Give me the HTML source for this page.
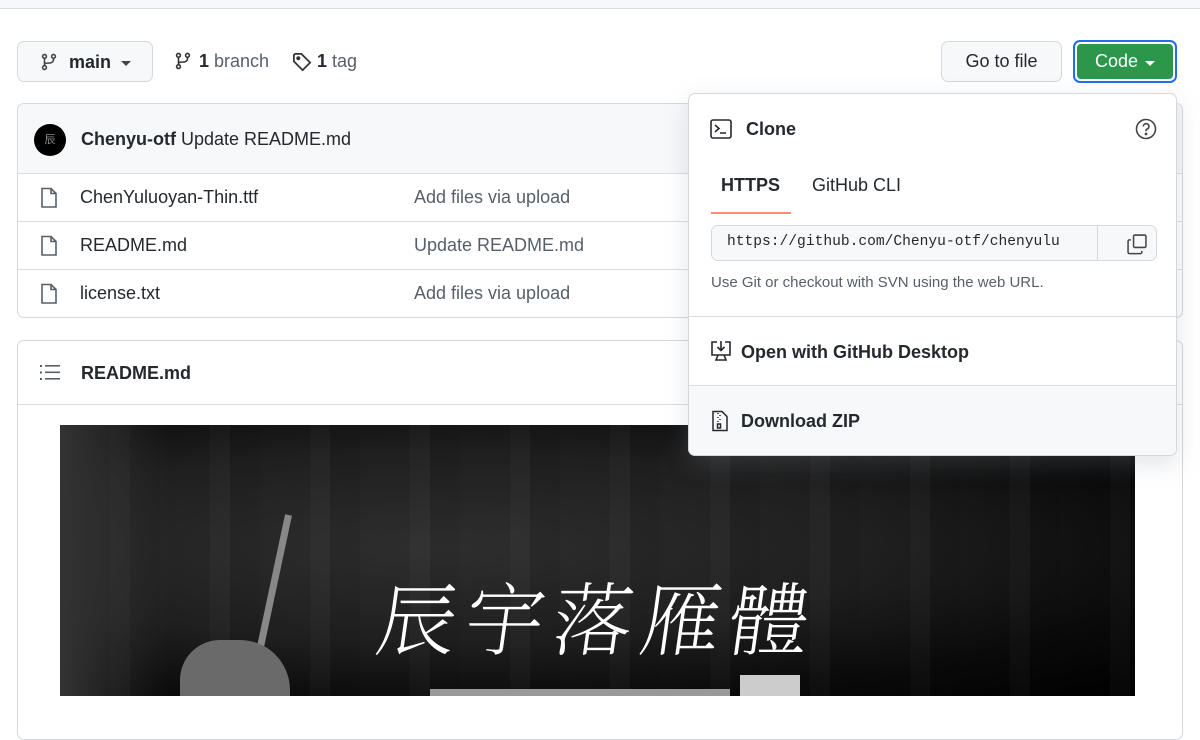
<!DOCTYPE html>
<html><head><meta charset="utf-8"><style>
*{box-sizing:border-box;margin:0;padding:0}
body{width:1200px;height:696px;overflow:hidden;background:#fff;font-family:"Liberation Sans","Noto Sans CJK TC",sans-serif;color:#24292f;position:relative;font-size:18px}
.abs{position:absolute}
.btn{position:absolute;border:1px solid #d4d8dd;border-radius:7px;background:#f6f8fa;display:flex;align-items:center}
svg{display:block}
.row{position:absolute;left:17px;width:1166px;height:48px;border-top:1px solid #d8dee4;display:flex;align-items:center}
.row .n{position:absolute;left:63px}
.row .m{position:absolute;left:397px;color:#57606a}
</style></head><body>
<div class="abs" style="left:0;top:0;width:1200px;height:9px;background:#f6f8fa;border-bottom:1px solid #d8dee4"></div>

<div class="btn" style="left:17px;top:41px;width:136px;height:41px;">
 <svg class="abs" style="left:22px;top:11px" width="18" height="18" viewBox="0 0 16 16" fill="none" stroke="#444" stroke-width="1.4"><circle cx="4" cy="3" r="1.7"/><circle cx="4" cy="13" r="1.7"/><circle cx="12" cy="3" r="1.7"/><path d="M4 4.7v6.6M12 4.7v1.3c0 2-2 3-4 3H6c-1.2 0-2 .8-2 2"/></svg>
 <span class="abs" style="left:51px;top:10px;font-weight:bold">main</span>
 <span class="abs" style="left:103px;top:19px;border:5px solid transparent;border-top:5px solid #444;border-bottom:0"></span>
</div>
<svg class="abs" style="left:174px;top:52px" width="18" height="18" viewBox="0 0 16 16" fill="none" stroke="#333" stroke-width="1.4"><circle cx="4" cy="3" r="1.7"/><circle cx="4" cy="13" r="1.7"/><circle cx="12" cy="3" r="1.7"/><path d="M4 4.7v6.6M12 4.7v1.3c0 2-2 3-4 3H6c-1.2 0-2 .8-2 2"/></svg>
<div class="abs" style="left:199px;top:51px"><b>1</b> <span style="color:#57606a">branch</span></div>
<svg class="abs" style="left:292px;top:52px" width="20" height="20" viewBox="0 0 16 16" fill="none" stroke="#333" stroke-width="1.4"><path d="M1.5 2.5v5l7 7 6-6-7-7h-5z"/><circle cx="5" cy="5" r=".9" fill="#333"/></svg>
<div class="abs" style="left:317px;top:51px"><b>1</b> <span style="color:#57606a">tag</span></div>

<div class="btn" style="left:941px;top:41px;width:121px;height:41px;justify-content:center">Go to file</div>
<div class="abs" style="left:1073px;top:40px;width:104px;height:43px;border:2px solid #1f6feb;border-radius:7px;padding:2px"><div style="width:100%;height:100%;background:#2c974b;border-radius:4px;color:#fff;display:flex;align-items:center;justify-content:center;font-size:18px">Code<span style="margin-left:7px;border:5px solid transparent;border-top:5px solid #fff;border-bottom:0;margin-top:3px"></span></div></div>

<div class="abs" style="left:17px;top:103px;width:1166px;height:215px;border:1px solid #d4d8dd;border-radius:7px;overflow:hidden">
 <div style="height:70px;background:#f6f8fa;position:relative">
  <div class="abs" style="left:16px;top:20px;width:32px;height:32px;border-radius:50%;background:#000;color:#888;font-size:11px;text-align:center;line-height:32px">辰</div>
  <div class="abs" style="left:63px;top:25px"><b>Chenyu-otf</b> Update README.md</div>
 </div>
</div>
<div class="row" style="top:173px"><svg class="abs" style="left:23px" width="18" height="22" viewBox="0 0 18 22" fill="none" stroke="#57606a" stroke-width="1.6"><path d="M2 1.5h9l5 5v13.5H2z M11 1.5v5h5"/></svg><span class="n">ChenYuluoyan-Thin.ttf</span><span class="m">Add files via upload</span></div>
<div class="row" style="top:221px"><svg class="abs" style="left:23px" width="18" height="22" viewBox="0 0 18 22" fill="none" stroke="#57606a" stroke-width="1.6"><path d="M2 1.5h9l5 5v13.5H2z M11 1.5v5h5"/></svg><span class="n">README.md</span><span class="m">Update README.md</span></div>
<div class="row" style="top:269px"><svg class="abs" style="left:23px" width="18" height="22" viewBox="0 0 18 22" fill="none" stroke="#57606a" stroke-width="1.6"><path d="M2 1.5h9l5 5v13.5H2z M11 1.5v5h5"/></svg><span class="n">license.txt</span><span class="m">Add files via upload</span></div>

<div class="abs" style="left:17px;top:340px;width:1166px;height:400px;border:1px solid #d4d8dd;border-radius:7px;overflow:hidden">
 <div style="height:64px;border-bottom:1px solid #d8dee4;position:relative">
  <svg class="abs" style="left:22px;top:23px" width="20" height="17" viewBox="0 0 20 17" fill="#57606a"><rect x="0" y="1" width="2" height="2"/><rect x="0" y="7.5" width="2" height="2"/><rect x="0" y="14" width="2" height="2"/><rect x="5" y="1" width="15" height="1.6"/><rect x="5" y="7.5" width="15" height="1.6"/><rect x="5" y="14" width="15" height="1.6"/></svg>
  <b class="abs" style="left:63px;top:22px">README.md</b>
 </div>
</div>
<div class="abs" style="left:60px;top:425px;width:1075px;height:271px;overflow:hidden;background:radial-gradient(ellipse at 35% 45%,#2e2e2e 0%,#1f1f1f 45%,#0a0a0a 75%,#000 100%)">
 <div class="abs" style="left:0;top:0;width:1075px;height:271px;background:repeating-linear-gradient(90deg,rgba(255,255,255,0) 0 50px,rgba(255,255,255,.025) 50px 70px,rgba(0,0,0,.06) 70px 100px)"></div>
 <div class="abs" style="left:0;top:0;width:110px;height:271px;background:linear-gradient(90deg,#333,rgba(30,30,30,0))"></div>
 <div class="abs" style="left:225px;top:90px;width:7px;height:160px;background:#888;transform:rotate(12deg);transform-origin:top"></div>
 <div class="abs" style="left:120px;top:215px;width:110px;height:80px;background:#6a6a6a;border-radius:40px 50px 0 0"></div>
 <div class="abs" style="left:318px;top:145px;color:#fff;font-size:80px;line-height:90px;font-family:'Noto Serif CJK SC',serif;font-weight:200;letter-spacing:8px;transform:skewX(-8deg);white-space:nowrap">辰宇落雁體</div>
 <div class="abs" style="left:680px;top:250px;width:60px;height:30px;background:#ccc"></div>
 <div class="abs" style="left:370px;top:264px;width:300px;height:10px;background:#999"></div>
</div>

<div class="abs" style="left:688px;top:93px;width:489px;height:363px;background:#fff;border:1px solid #d4d8dd;border-radius:7px;box-shadow:0 8px 24px rgba(140,149,159,.25);overflow:hidden">
 <svg class="abs" style="left:21px;top:25px" width="22" height="20" viewBox="0 0 22 20" fill="none" stroke="#24292f" stroke-width="1.6"><rect x="1" y="1" width="20" height="18" rx="2"/><path d="M5 6l4 3.5L5 13M10 14h6"/></svg>
 <b class="abs" style="left:57px;top:25px">Clone</b>
 <svg class="abs" style="left:446px;top:24px" width="22" height="22" viewBox="0 0 22 22" fill="none" stroke="#444" stroke-width="1.6"><circle cx="11" cy="11" r="9.5"/><path d="M8.3 8.5a2.8 2.8 0 1 1 3.7 2.6c-.7.3-1 .8-1 1.6v.5"/><circle cx="11" cy="16" r=".6" fill="#444"/></svg>
 <b class="abs" style="left:32px;top:81px;font-size:18px">HTTPS</b>
 <span class="abs" style="left:123px;top:81px">GitHub CLI</span>
 <div class="abs" style="left:22px;top:118px;width:80px;height:2px;background:#fd8c73"></div>
 <div class="abs" style="left:22px;top:131px;width:446px;height:36px;border:1px solid #d4d8dd;border-radius:7px;background:#f6f8fa;overflow:hidden">
  <div class="abs" style="left:0;top:0;width:386px;height:34px;background:#f6f8fa;border-right:1px solid #d4d8dd;font-family:'Liberation Mono',monospace;font-size:14.6px;padding:8px 0 0 15px;white-space:nowrap;overflow:hidden">https://github.com/Chenyu-otf/chenyulu</div>
  <svg class="abs" style="left:414px;top:7px" width="22" height="22" viewBox="0 0 16 16" fill="none" stroke="#444" stroke-width="1.1"><rect x="5.5" y="1.5" width="9" height="9" rx="1"/><path d="M3.5 5H2.5a1 1 0 0 0-1 1v8a1 1 0 0 0 1 1h8a1 1 0 0 0 1-1v-1"/></svg>
 </div>
 <div class="abs" style="left:22px;top:180px;font-size:15px;color:#57606a">Use Git or checkout with SVN using the web URL.</div>
 <div class="abs" style="left:0;top:222px;width:489px;height:1px;background:#d8dee4"></div>
 <svg class="abs" style="left:21px;top:246px" width="22" height="22" viewBox="0 0 22 22" fill="none" stroke="#24292f" stroke-width="1.6"><path d="M7 2H2v13h18V2h-5M11 1v9M7.5 7l3.5 3.5L14.5 7M8 15l-2 5h10l-2-5"/></svg>
 <b class="abs" style="left:52px;top:248px">Open with GitHub Desktop</b>
 <div class="abs" style="left:0;top:291px;width:489px;height:72px;background:#f6f8fa;border-top:1px solid #d8dee4"></div>
 <svg class="abs" style="left:22px;top:316px" width="18" height="22" viewBox="0 0 18 22" fill="none" stroke="#24292f" stroke-width="1.5"><path d="M2 1.5h9l5 5v14H2z"/><path d="M7 3v1M9 5v1M7 7v1M9 9v1M7 11v1" /><rect x="6.5" y="14" width="3" height="4"/></svg>
 <b class="abs" style="left:52px;top:317px">Download ZIP</b>
</div>
</body></html>
